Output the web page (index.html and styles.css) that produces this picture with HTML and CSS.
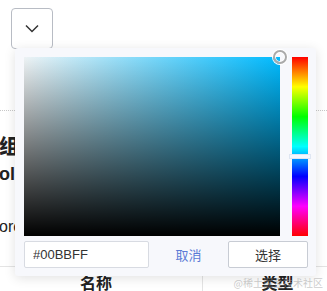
FILE: index.html
```html
<!DOCTYPE html>
<html lang="zh-CN">
<head>
  <meta charset="UTF-8">
  <meta name="viewport" content="width=device-width, initial-scale=1.0">
  <title>Color Picker</title>
  <link rel="stylesheet" href="styles.css">
</head>
<body>
  <div class="page">
    <button class="toggle" aria-label="open">
      <svg width="14" height="9" viewBox="0 0 14 9"><path d="M1 1.5 L7 7.5 L13 1.5" fill="none" stroke="#333" stroke-width="1.5"/></svg>
    </button>

    <div class="divider"></div>

    <h3 class="title">组件示例</h3>
    <p class="subtitle">olor</p>
    <p class="text">orce</p>

    <div class="table-head">
      <div class="cell">名称</div>
      <div class="cell">类型</div>
    </div>

    <!-- color picker popup -->
    <div class="picker">
      <div class="picker-main">
        <div class="sat">
          <span class="sat-cursor"></span>
        </div>
        <div class="hue">
          <span class="hue-thumb"></span>
        </div>
      </div>
      <div class="picker-foot">
        <input class="hex" type="text" value="#00BBFF">
        <span class="cancel">取消</span>
        <button class="ok">选择</button>
      </div>
    </div>

    <div class="watermark">@稀土掘金技术社区</div>
  </div>
</body>
</html>
```

FILE: styles.css
```css
body {
  margin: 0;
  font-family: "Noto Sans CJK SC", "Liberation Sans", sans-serif;
  background: #fff;
  color: #222;
}
.page {
  position: relative;
  height: 291px;
  overflow: hidden;
}
.toggle {
  display: flex;
  align-items: center;
  justify-content: center;
  width: 42px;
  height: 41px;
  margin: 8px 0 0 11px;
  padding: 0;
  background: #fff;
  border: 1px solid #b8bcc4;
  border-radius: 4px;
}
.divider {
  margin-top: 61px;
  border-top: 1px dotted #c8c8c8;
}
.title {
  margin: 21px 0 0 -1px;
  font-size: 20px;
  line-height: 28px;
  font-weight: 900;
}
.subtitle {
  margin: 2px 0 0 -1px;
  font-family: "Liberation Sans", sans-serif;
  font-size: 18px;
  line-height: 24px;
  font-weight: bold;
}
.text {
  margin: 31px 0 0 -1px;
  font-family: "Liberation Sans", sans-serif;
  font-size: 16px;
  line-height: 20px;
}
.table-head {
  display: grid;
  grid-template-columns: 212px 150px;
  width: 362px;
  margin: 29px 0 0 -10px;
  border-top: 1px solid #e4e4e4;
}
.table-head .cell {
  padding-top: 4px;
  text-align: center;
  font-size: 16px;
  font-weight: bold;
  line-height: 22px;
}
.table-head .cell + .cell {
  border-left: 1px solid #e4e4e4;
}
.picker {
  position: absolute;
  left: 15px;
  top: 48px;
  width: 301px;
  height: 228px;
  box-sizing: border-box;
  padding: 9px 8px 8px 9px;
  background: #f7f8fc;
  border-radius: 3px;
  box-shadow: 0 2px 12px rgba(0, 0, 0, 0.12);
}
.picker-main {
  display: flex;
  gap: 12px;
}
.sat {
  position: relative;
  width: 256px;
  height: 179px;
  background:
    linear-gradient(to bottom, rgba(0, 0, 0, 0), #000),
    linear-gradient(to right, #eef3f5, #00bbff);
}
.sat-cursor {
  position: absolute;
  right: -7px;
  top: -7px;
  width: 10px;
  height: 10px;
  border: 2px solid #aaa;
  border-radius: 50%;
  box-shadow: inset 0 0 0 1px #fff, 0 0 0 1px #fff;
}
.hue {
  position: relative;
  width: 16px;
  height: 179px;
  background: linear-gradient(to bottom, #f00, #ff0, #0f0, #0ff, #00f, #f0f, #f00);
}
.hue-thumb {
  position: absolute;
  left: -3px;
  right: -3px;
  top: 97px;
  height: 3px;
  background: #f4f7ff;
  border: 1px solid #dfe6f2;
}
.picker-foot {
  display: flex;
  align-items: center;
  margin-top: 5px;
}
.hex {
  width: 125px;
  height: 27px;
  box-sizing: border-box;
  padding: 0 8px;
  border: 1px solid #d8dbe2;
  border-radius: 2px;
  background: #fff;
  font-family: "Liberation Sans", sans-serif;
  font-size: 13px;
  color: #333;
}
.cancel {
  width: 79px;
  text-align: center;
  font-size: 13px;
  color: #5b7bd6;
}
.ok {
  width: 80px;
  height: 27px;
  border: 1px solid #c8ccd4;
  border-radius: 2px;
  background: #fff;
  font-family: "Noto Sans CJK SC", sans-serif;
  font-size: 13px;
  color: #333;
}
.watermark {
  position: absolute;
  right: 4px;
  bottom: 1px;
  font-size: 10px;
  color: rgba(160, 160, 160, 0.55);
}
```
